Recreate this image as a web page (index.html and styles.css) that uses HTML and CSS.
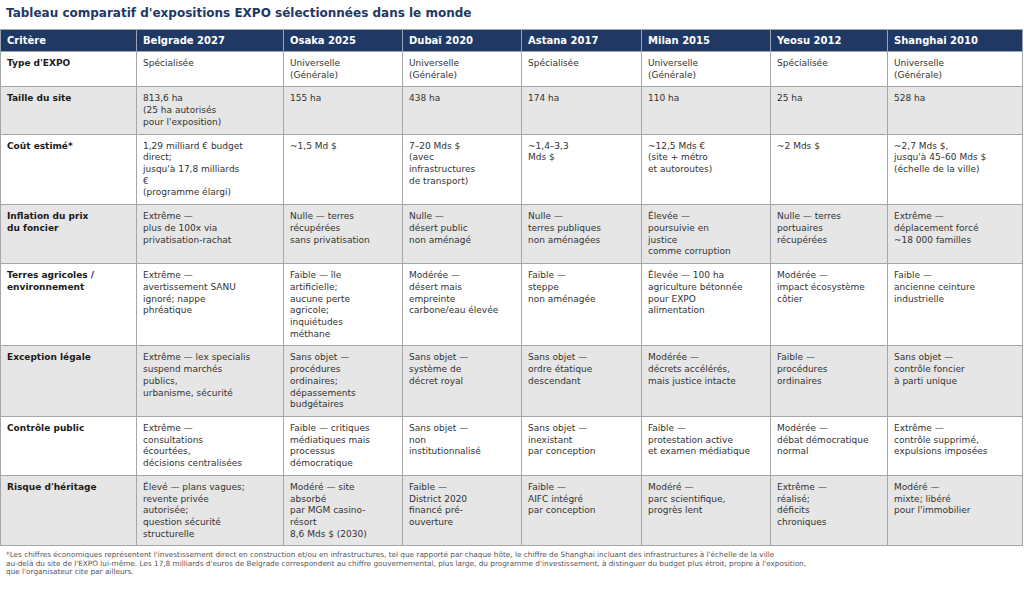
FILE: index.html
```html
<!DOCTYPE html>
<html lang="fr">
<head>
<meta charset="utf-8">
<title>Tableau comparatif EXPO</title>
<link rel="stylesheet" href="styles.css">
</head>
<body>
<div class="page">
  <h1 class="title">Tableau comparatif d'expositions EXPO sélectionnées dans le monde</h1>
  <table class="cmp">
    <colgroup>
      <col class="c1"><col class="c2"><col class="c3"><col class="c4"><col class="c5"><col class="c6"><col class="c7"><col class="c8">
    </colgroup>
    <thead>
      <tr>
        <th>Critère</th><th>Belgrade 2027</th><th>Osaka 2025</th><th>Dubaï 2020</th><th>Astana 2017</th><th>Milan 2015</th><th>Yeosu 2012</th><th>Shanghai 2010</th>
      </tr>
    </thead>
    <tbody>
      <tr class="odd">
        <td class="crit">Type d'EXPO</td>
        <td>Spécialisée</td>
        <td>Universelle<br>(Générale)</td>
        <td>Universelle<br>(Générale)</td>
        <td>Spécialisée</td>
        <td>Universelle<br>(Générale)</td>
        <td>Spécialisée</td>
        <td>Universelle<br>(Générale)</td>
      </tr>
      <tr class="even">
        <td class="crit">Taille du site</td>
        <td>813,6 ha<br>(25 ha autorisés<br>pour l'exposition)</td>
        <td>155 ha</td>
        <td>438 ha</td>
        <td>174 ha</td>
        <td>110 ha</td>
        <td>25 ha</td>
        <td>528 ha</td>
      </tr>
      <tr class="odd">
        <td class="crit">Coût estimé*</td>
        <td>1,29 milliard € budget<br>direct;<br>jusqu'à 17,8 milliards<br>€<br>(programme élargi)</td>
        <td>~1,5 Md $</td>
        <td>7–20 Mds $<br>(avec<br>infrastructures<br>de transport)</td>
        <td>~1,4–3,3<br>Mds $</td>
        <td>~12,5 Mds €<br>(site + métro<br>et autoroutes)</td>
        <td>~2 Mds $</td>
        <td>~2,7 Mds $,<br>jusqu'à 45–60 Mds $<br>(échelle de la ville)</td>
      </tr>
      <tr class="even">
        <td class="crit">Inflation du prix<br>du foncier</td>
        <td>Extrême —<br>plus de 100x via<br>privatisation-rachat</td>
        <td>Nulle — terres<br>récupérées<br>sans privatisation</td>
        <td>Nulle —<br>désert public<br>non aménagé</td>
        <td>Nulle —<br>terres publiques<br>non aménagées</td>
        <td>Élevée —<br>poursuivie en<br>justice<br>comme corruption</td>
        <td>Nulle — terres<br>portuaires<br>récupérées</td>
        <td>Extrême —<br>déplacement forcé<br>~18 000 familles</td>
      </tr>
      <tr class="odd">
        <td class="crit">Terres agricoles /<br>environnement</td>
        <td>Extrême —<br>avertissement SANU<br>ignoré; nappe<br>phréatique</td>
        <td>Faible — île<br>artificielle;<br>aucune perte<br>agricole;<br>inquiétudes<br>méthane</td>
        <td>Modérée —<br>désert mais<br>empreinte<br>carbone/eau élevée</td>
        <td>Faible —<br>steppe<br>non aménagée</td>
        <td>Élevée — 100 ha<br>agriculture bétonnée<br>pour EXPO<br>alimentation</td>
        <td>Modérée —<br>impact écosystème<br>côtier</td>
        <td>Faible —<br>ancienne ceinture<br>industrielle</td>
      </tr>
      <tr class="even">
        <td class="crit">Exception légale</td>
        <td>Extrême — lex specialis<br>suspend marchés<br>publics,<br>urbanisme, sécurité</td>
        <td>Sans objet —<br>procédures<br>ordinaires;<br>dépassements<br>budgétaires</td>
        <td>Sans objet —<br>système de<br>décret royal</td>
        <td>Sans objet —<br>ordre étatique<br>descendant</td>
        <td>Modérée —<br>décrets accélérés,<br>mais justice intacte</td>
        <td>Faible —<br>procédures<br>ordinaires</td>
        <td>Sans objet —<br>contrôle foncier<br>à parti unique</td>
      </tr>
      <tr class="odd">
        <td class="crit">Contrôle public</td>
        <td>Extrême —<br>consultations<br>écourtées,<br>décisions centralisées</td>
        <td>Faible — critiques<br>médiatiques mais<br>processus<br>démocratique</td>
        <td>Sans objet —<br>non<br>institutionnalisé</td>
        <td>Sans objet —<br>inexistant<br>par conception</td>
        <td>Faible —<br>protestation active<br>et examen médiatique</td>
        <td>Modérée —<br>débat démocratique<br>normal</td>
        <td>Extrême —<br>contrôle supprimé,<br>expulsions imposées</td>
      </tr>
      <tr class="even">
        <td class="crit">Risque d'héritage</td>
        <td>Élevé — plans vagues;<br>revente privée<br>autorisée;<br>question sécurité<br>structurelle</td>
        <td>Modéré — site<br>absorbé<br>par MGM casino-<br>résort<br>8,6 Mds $ (2030)</td>
        <td>Faible —<br>District 2020<br>financé pré-<br>ouverture</td>
        <td>Faible —<br>AIFC intégré<br>par conception</td>
        <td>Modéré —<br>parc scientifique,<br>progrès lent</td>
        <td>Extrême —<br>réalisé;<br>déficits<br>chroniques</td>
        <td>Modéré —<br>mixte; libéré<br>pour l'immobilier</td>
      </tr>
    </tbody>
  </table>
  <p class="note">*Les chiffres économiques représentent l'investissement direct en construction et/ou en infrastructures, tel que rapporté par chaque hôte, le chiffre de Shanghai incluant des infrastructures à l'échelle de la ville<br>au-delà du site de l'EXPO lui-même. Les 17,8 milliards d'euros de Belgrade correspondent au chiffre gouvernemental, plus large, du programme d'investissement, à distinguer du budget plus étroit, propre à l'exposition,<br>que l'organisateur cite par ailleurs.</p>
</div>
</body>
</html>
```

FILE: styles.css
```css
html, body {
  margin: 0;
  padding: 0;
  background: #ffffff;
}

body {
  font-family: "DejaVu Sans", "Liberation Sans", sans-serif;
  color: #333333;
}

.page {
  width: 1024px;
}

.title {
  margin: 0;
  padding: 5px 0 0 6px;
  height: 24px;
  font-size: 12px;
  font-weight: bold;
  color: #1f3864;
  line-height: 16px;
}

.cmp {
  border-collapse: collapse;
  table-layout: fixed;
  width: 1022px;
  margin: 0;
}

.c1 { width: 136px; }
.c2 { width: 147px; }
.c3 { width: 119px; }
.c4 { width: 119px; }
.c5 { width: 120px; }
.c6 { width: 129px; }
.c7 { width: 117px; }
.c8 { width: 135px; }

.cmp th {
  background: #1f3864;
  color: #ffffff;
  font-size: 10px;
  font-weight: bold;
  text-align: left;
  height: 22px;
  padding: 0 6px;
  box-sizing: border-box;
  border: 1px solid #9aa3b0;
  white-space: nowrap;
}

.cmp td {
  font-size: 9px;
  line-height: 11.72px;
  vertical-align: top;
  padding: 6px 6px 5px 6px;
  border: 1px solid #a6a6a6;
  white-space: nowrap;
  color: #333333;
}

.cmp td.crit {
  font-weight: bold;
  color: #1a1a1a;
}

.cmp tr.odd td {
  background: #ffffff;
}

.cmp tr.even td {
  background: #e6e6e6;
}

.note {
  margin: 5px 0 0 6px;
  font-size: 7.3px;
  line-height: 8.5px;
  color: #555555;
}
```
